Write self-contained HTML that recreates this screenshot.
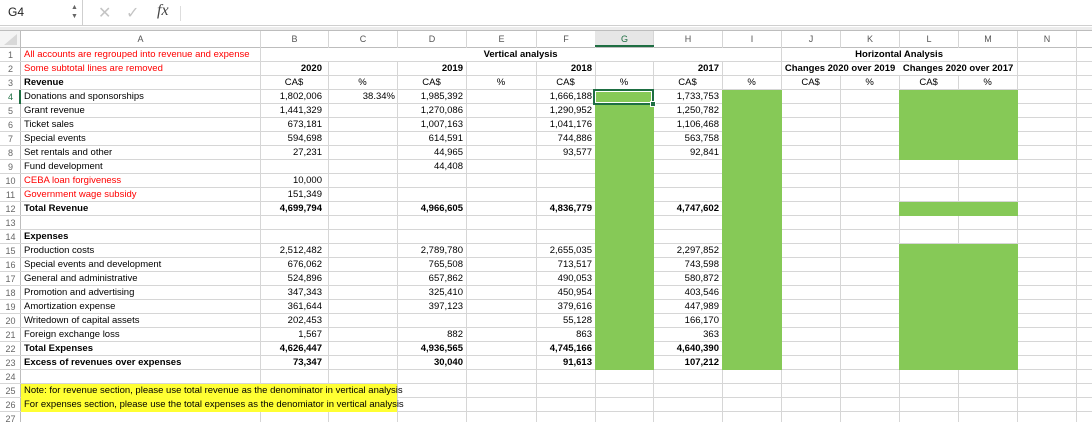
<!DOCTYPE html>
<html><head><meta charset="utf-8">
<style>
*{margin:0;padding:0;box-sizing:border-box}
body{width:1092px;height:422px;overflow:hidden;background:#fff;font-family:"Liberation Sans",sans-serif;position:relative}
.abs{position:absolute}
.vl{position:absolute;width:1px;background:#d6d6d6}
.hl{position:absolute;height:1px;background:#d6d6d6;left:0;width:1092px}
table{position:absolute;left:0;top:48px;width:1092px;border-collapse:collapse;table-layout:fixed;font-size:9.5px;color:#000;z-index:5}
td{height:14px;line-height:14px;padding:0 3px;white-space:nowrap;overflow:visible;vertical-align:middle}
td.r{text-align:right}
td.c{text-align:center}
td.n{text-align:center;color:#666;font-size:9px;padding:0}
tr.b td{font-weight:bold}
.red{color:#ff0000}
.g{background:#86c957;position:absolute;z-index:2}
.hdr{position:absolute;top:31px;height:17px;line-height:17px;text-align:center;font-size:9px;color:#555}
</style></head><body>
<div class="abs" style="left:0;top:0;width:1092px;height:26px;border-bottom:1px solid #cfcfcf;background:#fff"></div>
<div class="abs" style="left:8px;top:5px;font-size:12px;color:#222">G4</div>
<div class="abs" style="left:71px;top:3px;font-size:7px;color:#666;line-height:9px">▲<br>▼</div>
<div class="abs" style="left:82px;top:0;width:1px;height:26px;background:#cfcfcf"></div>
<div class="abs" style="left:98px;top:3px;font-size:16px;color:#c4c4c4">✕</div>
<div class="abs" style="left:126px;top:3px;font-size:16px;color:#c4c4c4">✓</div>
<div class="abs" style="left:157px;top:2px;font-size:16px;font-family:'Liberation Serif',serif;font-style:italic;color:#444">fx</div>
<div class="abs" style="left:180px;top:6px;width:1px;height:15px;background:#ddd"></div>
<div class="abs" style="left:0;top:27px;width:1092px;height:4px;background:#ececec;border-bottom:1px solid #bdbdbd"></div>
<div class="abs" style="left:0;top:47px;width:1092px;height:1px;background:#bdbdbd"></div>
<div class="abs" style="left:0;top:31px;width:21px;height:16px;background:#f4f4f4"></div>
<div class="abs" style="left:4px;top:34px;width:0;height:0;border-left:13px solid transparent;border-bottom:11px solid #d8d8d8"></div>

<div class="vl" style="left:20px;top:31px;height:391px;background:#bdbdbd"></div>
<div class="vl" style="left:260px;top:31px;height:391px"></div>
<div class="vl" style="left:328px;top:31px;height:391px"></div>
<div class="vl" style="left:397px;top:31px;height:391px"></div>
<div class="vl" style="left:466px;top:31px;height:391px"></div>
<div class="vl" style="left:536px;top:31px;height:391px"></div>
<div class="vl" style="left:595px;top:31px;height:391px"></div>
<div class="vl" style="left:653px;top:31px;height:391px"></div>
<div class="vl" style="left:722px;top:31px;height:391px"></div>
<div class="vl" style="left:781px;top:31px;height:391px"></div>
<div class="vl" style="left:840px;top:31px;height:391px"></div>
<div class="vl" style="left:899px;top:31px;height:391px"></div>
<div class="vl" style="left:958px;top:31px;height:391px"></div>
<div class="vl" style="left:1017px;top:31px;height:391px"></div>
<div class="vl" style="left:1076px;top:31px;height:391px"></div>
<div class="hl" style="top:61px"></div><div class="hl" style="top:75px"></div><div class="hl" style="top:89px"></div>
<div class="hl" style="top:103px"></div><div class="hl" style="top:117px"></div><div class="hl" style="top:131px"></div>
<div class="hl" style="top:145px"></div><div class="hl" style="top:159px"></div><div class="hl" style="top:173px"></div>
<div class="hl" style="top:187px"></div><div class="hl" style="top:201px"></div><div class="hl" style="top:215px"></div>
<div class="hl" style="top:229px"></div><div class="hl" style="top:243px"></div><div class="hl" style="top:257px"></div>
<div class="hl" style="top:271px"></div><div class="hl" style="top:285px"></div><div class="hl" style="top:299px"></div>
<div class="hl" style="top:313px"></div><div class="hl" style="top:327px"></div><div class="hl" style="top:341px"></div>
<div class="hl" style="top:355px"></div><div class="hl" style="top:369px"></div><div class="hl" style="top:383px"></div>
<div class="hl" style="top:397px"></div><div class="hl" style="top:411px"></div>

<div class="abs" style="left:261px;top:48px;width:520px;height:13px;background:#fff;z-index:1"></div>
<div class="abs" style="left:782px;top:48px;width:235px;height:13px;background:#fff;z-index:1"></div>
<div class="abs" style="left:782px;top:62px;width:235px;height:13px;background:#fff;z-index:1"></div>

<div class="g" style="left:595px;top:90px;width:59px;height:280px"></div>
<div class="g" style="left:722px;top:90px;width:60px;height:280px"></div>
<div class="g" style="left:899px;top:90px;width:119px;height:70px"></div>
<div class="g" style="left:899px;top:202px;width:119px;height:14px"></div>
<div class="g" style="left:899px;top:244px;width:119px;height:126px"></div>
<div class="abs" style="left:21px;top:384px;width:376px;height:28px;background:#ffff33;z-index:2"></div>

<div class="abs" style="left:593px;top:89px;width:61px;height:16px;border:2px solid #1e6e42;z-index:6"></div>
<div class="abs" style="left:595px;top:91px;width:57px;height:12px;border:1px solid #fff;z-index:6"></div>
<div class="abs" style="left:650px;top:101px;width:6px;height:6px;background:#1e6e42;border:1px solid #fff;z-index:7"></div>
<div class="abs" style="left:19px;top:90px;width:2px;height:14px;background:#1e6e42;z-index:6"></div>
<div class="abs" style="left:595px;top:45px;width:59px;height:2px;background:#1e6e42;z-index:6"></div>
<div class="abs" style="left:595px;top:31px;width:58px;height:14px;background:#e6e6e6"></div>

<div class="hdr" style="left:21px;width:239px">A</div>
<div class="hdr" style="left:261px;width:67px">B</div>
<div class="hdr" style="left:329px;width:68px">C</div>
<div class="hdr" style="left:398px;width:68px">D</div>
<div class="hdr" style="left:467px;width:69px">E</div>
<div class="hdr" style="left:537px;width:58px">F</div>
<div class="hdr" style="left:596px;width:57px;color:#1e6e42;z-index:7">G</div>
<div class="hdr" style="left:654px;width:68px">H</div>
<div class="hdr" style="left:723px;width:58px">I</div>
<div class="hdr" style="left:782px;width:58px">J</div>
<div class="hdr" style="left:841px;width:58px">K</div>
<div class="hdr" style="left:900px;width:58px">L</div>
<div class="hdr" style="left:959px;width:58px">M</div>
<div class="hdr" style="left:1018px;width:58px">N</div>

<table>
<colgroup>
<col style="width:21px"><col style="width:239px"><col style="width:68px"><col style="width:69px"><col style="width:69px"><col style="width:70px"><col style="width:59px"><col style="width:58px"><col style="width:69px"><col style="width:59px"><col style="width:59px"><col style="width:59px"><col style="width:59px"><col style="width:59px"><col style="width:59px"><col style="width:16px">
</colgroup>
<tr><td class="n">1</td><td class="red">All accounts are regrouped into revenue and expense</td><td colspan="8" class="c" style="font-weight:bold">Vertical analysis</td><td colspan="4" class="c" style="font-weight:bold">Horizontal Analysis</td><td></td><td></td></tr>
<tr class="b"><td class="n" style="font-weight:normal">2</td><td class="red" style="font-weight:normal">Some subtotal lines are removed</td><td class="r" style="padding-right:6px">2020</td><td></td><td class="r">2019</td><td></td><td class="r">2018</td><td></td><td class="r">2017</td><td></td><td colspan="2" class="c" style="padding:0">Changes 2020 over 2019</td><td colspan="2" class="c" style="padding:0">Changes 2020 over 2017</td><td></td><td></td></tr>
<tr><td class="n">3</td><td style="font-weight:bold">Revenue</td><td class="c">CA$</td><td class="c">%</td><td class="c">CA$</td><td class="c">%</td><td class="c">CA$</td><td class="c">%</td><td class="c">CA$</td><td class="c">%</td><td class="c">CA$</td><td class="c">%</td><td class="c">CA$</td><td class="c">%</td><td></td><td></td></tr>
<tr><td class="n" style="color:#1e6e42">4</td><td>Donations and sponsorships</td><td class="r" style="padding-right:6px">1,802,006</td><td class="r" style="padding-right:2px">38.34%</td><td class="r">1,985,392</td><td></td><td class="r">1,666,188</td><td></td><td class="r">1,733,753</td><td></td><td></td><td></td><td></td><td></td><td></td><td></td></tr>
<tr><td class="n">5</td><td>Grant revenue</td><td class="r" style="padding-right:6px">1,441,329</td><td></td><td class="r">1,270,086</td><td></td><td class="r">1,290,952</td><td></td><td class="r">1,250,782</td><td></td><td></td><td></td><td></td><td></td><td></td><td></td></tr>
<tr><td class="n">6</td><td>Ticket sales</td><td class="r" style="padding-right:6px">673,181</td><td></td><td class="r">1,007,163</td><td></td><td class="r">1,041,176</td><td></td><td class="r">1,106,468</td><td></td><td></td><td></td><td></td><td></td><td></td><td></td></tr>
<tr><td class="n">7</td><td>Special events</td><td class="r" style="padding-right:6px">594,698</td><td></td><td class="r">614,591</td><td></td><td class="r">744,886</td><td></td><td class="r">563,758</td><td></td><td></td><td></td><td></td><td></td><td></td><td></td></tr>
<tr><td class="n">8</td><td>Set rentals and other</td><td class="r" style="padding-right:6px">27,231</td><td></td><td class="r">44,965</td><td></td><td class="r">93,577</td><td></td><td class="r">92,841</td><td></td><td></td><td></td><td></td><td></td><td></td><td></td></tr>
<tr><td class="n">9</td><td>Fund development</td><td></td><td></td><td class="r">44,408</td><td></td><td></td><td></td><td></td><td></td><td></td><td></td><td></td><td></td><td></td><td></td></tr>
<tr><td class="n">10</td><td class="red">CEBA loan forgiveness</td><td class="r" style="padding-right:6px">10,000</td><td></td><td></td><td></td><td></td><td></td><td></td><td></td><td></td><td></td><td></td><td></td><td></td><td></td></tr>
<tr><td class="n">11</td><td class="red">Government wage subsidy</td><td class="r" style="padding-right:6px">151,349</td><td></td><td></td><td></td><td></td><td></td><td></td><td></td><td></td><td></td><td></td><td></td><td></td><td></td></tr>
<tr class="b"><td class="n" style="font-weight:normal">12</td><td>Total Revenue</td><td class="r" style="padding-right:6px">4,699,794</td><td></td><td class="r">4,966,605</td><td></td><td class="r">4,836,779</td><td></td><td class="r">4,747,602</td><td></td><td></td><td></td><td></td><td></td><td></td><td></td></tr>
<tr><td class="n">13</td><td></td><td></td><td></td><td></td><td></td><td></td><td></td><td></td><td></td><td></td><td></td><td></td><td></td><td></td><td></td></tr>
<tr><td class="n">14</td><td style="font-weight:bold">Expenses</td><td></td><td></td><td></td><td></td><td></td><td></td><td></td><td></td><td></td><td></td><td></td><td></td><td></td><td></td></tr>
<tr><td class="n">15</td><td>Production costs</td><td class="r" style="padding-right:6px">2,512,482</td><td></td><td class="r">2,789,780</td><td></td><td class="r">2,655,035</td><td></td><td class="r">2,297,852</td><td></td><td></td><td></td><td></td><td></td><td></td><td></td></tr>
<tr><td class="n">16</td><td>Special events and development</td><td class="r" style="padding-right:6px">676,062</td><td></td><td class="r">765,508</td><td></td><td class="r">713,517</td><td></td><td class="r">743,598</td><td></td><td></td><td></td><td></td><td></td><td></td><td></td></tr>
<tr><td class="n">17</td><td>General and administrative</td><td class="r" style="padding-right:6px">524,896</td><td></td><td class="r">657,862</td><td></td><td class="r">490,053</td><td></td><td class="r">580,872</td><td></td><td></td><td></td><td></td><td></td><td></td><td></td></tr>
<tr><td class="n">18</td><td>Promotion and advertising</td><td class="r" style="padding-right:6px">347,343</td><td></td><td class="r">325,410</td><td></td><td class="r">450,954</td><td></td><td class="r">403,546</td><td></td><td></td><td></td><td></td><td></td><td></td><td></td></tr>
<tr><td class="n">19</td><td>Amortization expense</td><td class="r" style="padding-right:6px">361,644</td><td></td><td class="r">397,123</td><td></td><td class="r">379,616</td><td></td><td class="r">447,989</td><td></td><td></td><td></td><td></td><td></td><td></td><td></td></tr>
<tr><td class="n">20</td><td>Writedown of capital assets</td><td class="r" style="padding-right:6px">202,453</td><td></td><td></td><td></td><td class="r">55,128</td><td></td><td class="r">166,170</td><td></td><td></td><td></td><td></td><td></td><td></td><td></td></tr>
<tr><td class="n">21</td><td>Foreign exchange loss</td><td class="r" style="padding-right:6px">1,567</td><td></td><td class="r">882</td><td></td><td class="r">863</td><td></td><td class="r">363</td><td></td><td></td><td></td><td></td><td></td><td></td><td></td></tr>
<tr class="b"><td class="n" style="font-weight:normal">22</td><td>Total Expenses</td><td class="r" style="padding-right:6px">4,626,447</td><td></td><td class="r">4,936,565</td><td></td><td class="r">4,745,166</td><td></td><td class="r">4,640,390</td><td></td><td></td><td></td><td></td><td></td><td></td><td></td></tr>
<tr class="b"><td class="n" style="font-weight:normal">23</td><td>Excess of revenues over expenses</td><td class="r" style="padding-right:6px">73,347</td><td></td><td class="r">30,040</td><td></td><td class="r">91,613</td><td></td><td class="r">107,212</td><td></td><td></td><td></td><td></td><td></td><td></td><td></td></tr>
<tr><td class="n">24</td><td></td><td></td><td></td><td></td><td></td><td></td><td></td><td></td><td></td><td></td><td></td><td></td><td></td><td></td><td></td></tr>
<tr><td class="n">25</td><td>Note: for revenue section, please use total revenue as the denominator in vertical analysis</td><td></td><td></td><td></td><td></td><td></td><td></td><td></td><td></td><td></td><td></td><td></td><td></td><td></td><td></td></tr>
<tr><td class="n">26</td><td>For expenses section, please use the total expenses as the denomiator in vertical analysis</td><td></td><td></td><td></td><td></td><td></td><td></td><td></td><td></td><td></td><td></td><td></td><td></td><td></td><td></td></tr>
<tr><td class="n">27</td><td></td><td></td><td></td><td></td><td></td><td></td><td></td><td></td><td></td><td></td><td></td><td></td><td></td><td></td><td></td></tr>
</table>
</body></html>
